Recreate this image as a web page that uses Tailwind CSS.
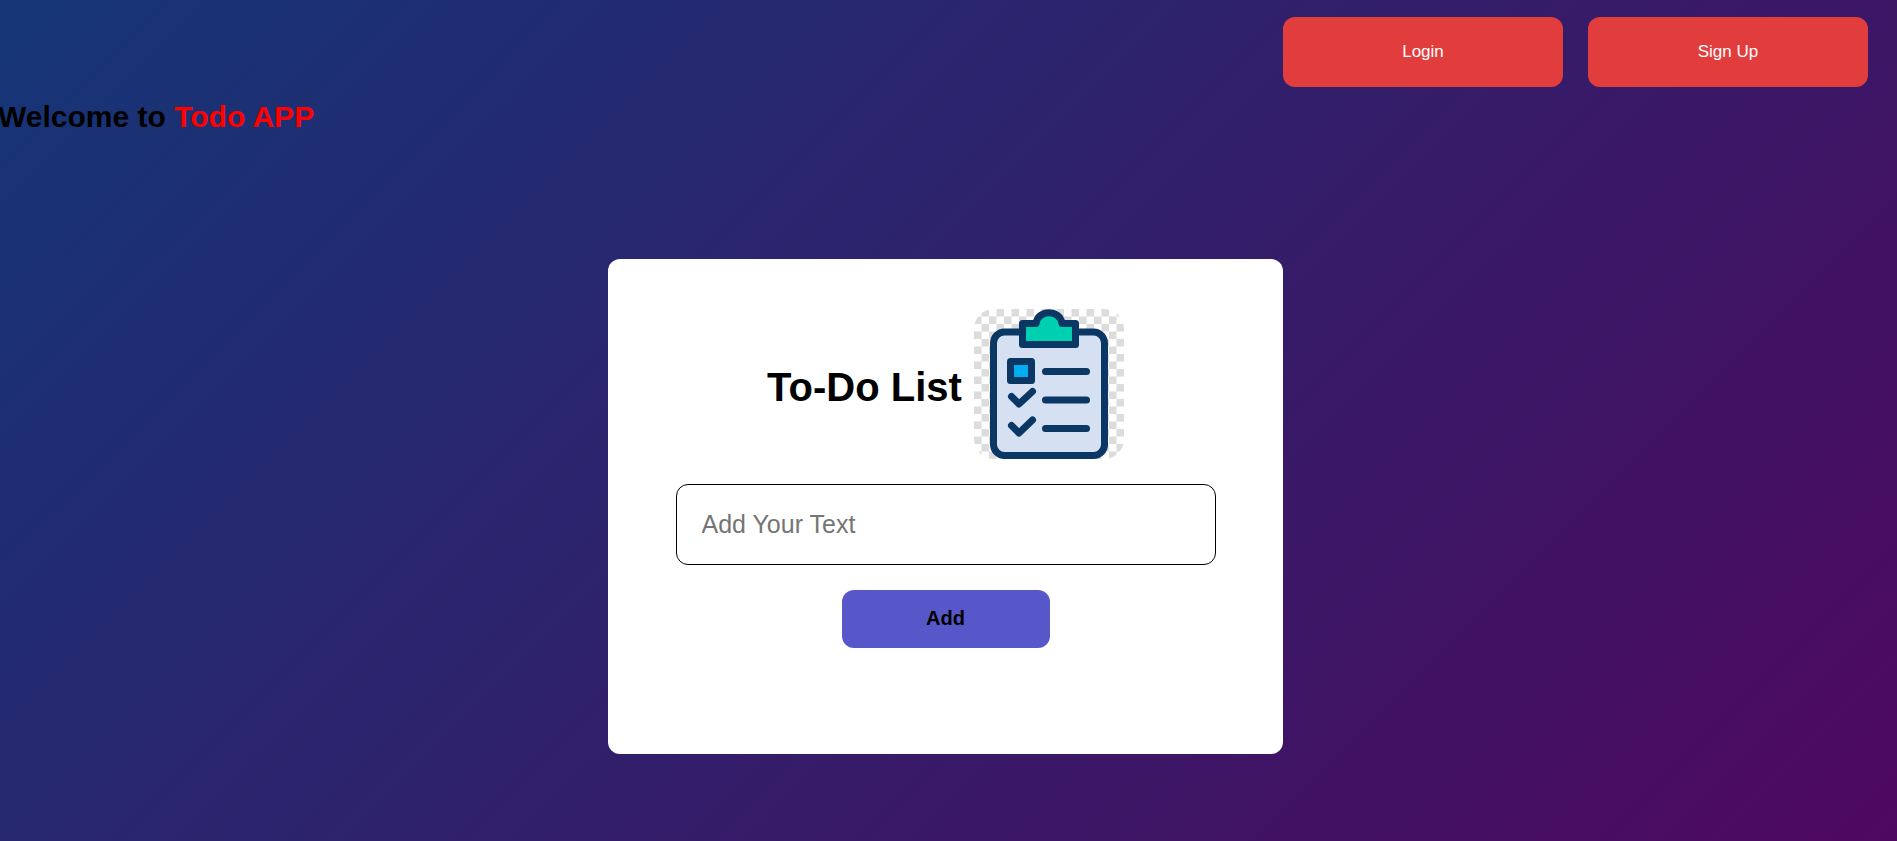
<!DOCTYPE html>
<html lang="en">
<head>
<meta charset="utf-8">
<meta name="viewport" content="width=device-width, initial-scale=1">
<title>Todo APP</title>
<script src="https://cdn.jsdelivr.net/npm/@tailwindcss/browser@4"></script>
</head>
<body class="min-h-screen overflow-x-hidden bg-[linear-gradient(135deg,#153677,#4e085f)] font-['Liberation_Sans',Arial,sans-serif] text-black">
<header>
  <nav class="flex justify-end gap-[25px] pt-[17px] pr-[29px]">
    <button type="button" class="h-[70px] w-[280px] cursor-pointer rounded-xl bg-[#e23d3d] text-[17px] text-white">Login</button>
    <button type="button" class="h-[70px] w-[280px] cursor-pointer rounded-xl bg-[#e23d3d] text-[17px] text-white">Sign Up</button>
  </nav>
  <h1 class="-ml-[2px] mt-3 text-[30px] leading-9 font-bold">Welcome to <span class="text-[#ff0000]">Todo APP</span></h1>
</header>
<main class="mt-[124px] flex justify-center pr-[6px]">
  <section class="flex min-h-[495px] w-full max-w-[675px] flex-col items-center rounded-xl bg-white pt-[50px]">
    <div class="flex items-center gap-3">
      <h2 class="pt-[6px] text-[40px] leading-[46px] font-bold">To-Do List</h2>
      <svg class="size-[150px] rounded-[20px]" viewBox="0 0 150 150" role="img" aria-label="Clipboard with a checklist">
        <defs>
          <pattern id="checks" width="15" height="15" patternUnits="userSpaceOnUse">
            <rect width="15" height="15" fill="#fff"/>
            <path d="M7.5 0H15V7.5H7.5zM0 7.5H7.5V15H0z" fill="#dcdcdc"/>
          </pattern>
        </defs>
        <rect width="150" height="150" fill="url(#checks)"/>
        <rect x="19.5" y="23" width="111" height="123.5" rx="11" fill="#d6e0f3" stroke="#0a3764" stroke-width="7"/>
        <path d="M48.5 14.500H62C64 0 86 0 88 14.500H101.500V35.500H48.500z" fill="#00d0b2" stroke="#0a3764" stroke-width="7" stroke-linejoin="round"/>
        <rect x="36.5" y="52.5" width="21" height="19" fill="#00aeef" stroke="#0a3764" stroke-width="7" stroke-linejoin="round"/>
        <path d="M71.500 62.500H112.500M71.500 91H112.500M71.500 119.500H112.500M37.500 87.500L45 95L58.500 82.500M37.500 116.500L45 124L58.500 111" fill="none" stroke="#0a3764" stroke-width="7" stroke-linecap="round" stroke-linejoin="round"/>
      </svg>
    </div>
    <input type="text" aria-label="Add Your Text" placeholder="Add Your Text" class="mt-[25px] h-[81px] w-4/5 rounded-xl border border-black bg-white px-[25px] text-[25px] placeholder:text-[#757575]">
    <button type="button" class="mt-[25px] h-[58px] w-[208px] cursor-pointer rounded-xl bg-[#5757c9] pb-[2px] text-xl font-bold">Add</button>
  </section>
</main>
</body>
</html>
